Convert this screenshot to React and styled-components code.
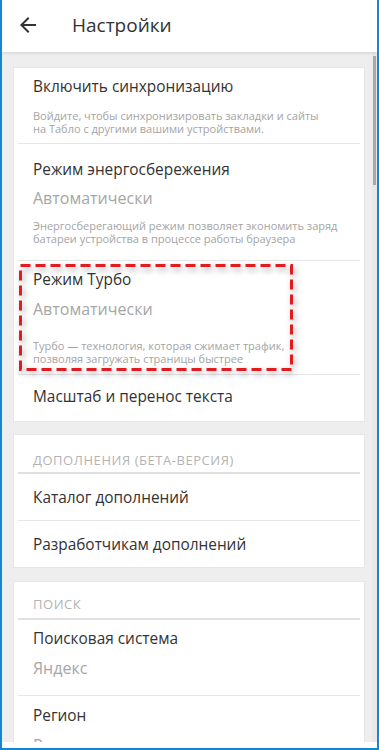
import React from 'react';
import styled, { createGlobalStyle } from 'styled-components';

const Global = createGlobalStyle`
  html, body {
    margin: 0;
    padding: 0;
    background: #ffffff;
  }
  * {
    box-sizing: border-box;
  }
`;

const Frame = styled.div`
  width: 379px;
  height: 750px;
  border: 2px solid #1487d2;
  border-top: none;
  background: #ffffff;
  display: flex;
  flex-direction: column;
  font-family: "Open Sans", "Noto Sans", sans-serif;
  overflow: hidden;
`;

const Header = styled.header`
  height: 52px;
  flex: none;
  display: flex;
  align-items: center;
  background: #ffffff;
  position: relative;
  z-index: 1;
  box-shadow: 0 1px 3px rgba(0, 0, 0, 0.12);
`;

const BackButton = styled.button`
  width: 24px;
  height: 24px;
  margin: -3px 0 0 14px;
  padding: 0;
  border: none;
  background: none;
  color: #333333;
  display: flex;
`;

const HeaderTitle = styled.h1`
  margin: -3px 0 0 32px;
  font-size: 19px;
  font-weight: 400;
  color: #333333;
`;

const Body = styled.div`
  height: 690px;
  flex: none;
  display: flex;
  background: #eeeeee;
  overflow: hidden;
`;

const Main = styled.main`
  flex: 1;
  padding: 15px 7px 0 11px;
  display: flex;
  flex-direction: column;
  gap: 12px;
`;

const Track = styled.div`
  width: 5px;
  flex: none;
  background: #e8e8e8;
  padding: 4px 0 0 1px;
`;

const Thumb = styled.div`
  width: 3px;
  height: 129px;
  background: #a9a9a9;
`;

const Card = styled.section`
  background: #ffffff;
  border: 1px solid #e6e6e6;
  margin-top: ${(p) => p.$top || 0}px;
`;

const Row = styled.div`
  position: relative;
  margin: 0 4px;
  padding: ${(p) => p.$pad} 15px;
  border-bottom: ${(p) => (p.$last ? 'none' : '1px solid #e6e6e6')};
`;

const SectionHead = styled.div`
  margin: 0 4px;
  padding: ${(p) => p.$pad} 15px;
  border-bottom: 2px solid #e0e0e0;
  font-size: 13px;
  line-height: 16px;
  letter-spacing: 0.55px;
  color: #b3b3b3;
  text-transform: uppercase;
`;

const Title = styled.div`
  font-size: 15.4px;
  line-height: 20px;
  color: #333333;
`;

const Value = styled.div`
  margin-top: ${(p) => p.$top || 8}px;
  font-size: 16px;
  line-height: 22px;
  color: #a6a6a6;
`;

const Desc = styled.div`
  margin-top: ${(p) => p.$top}px;
  font-size: 11px;
  line-height: 13px;
  color: #a4a4a4;
`;

const Highlight = styled.svg`
  position: absolute;
  left: 1px;
  top: 3px;
  width: 274px;
  height: 107px;
  overflow: visible;
  filter: drop-shadow(2px 3px 3px rgba(0, 0, 0, 0.35));
  pointer-events: none;
`;

const BottomGap = styled.div`
  flex: 1;
  background: #ffffff;
`;

function ArrowBack() {
  return (
    <svg width="24" height="24" viewBox="0 0 24 24" fill="currentColor">
      <path d="M20 11H7.83l5.59-5.59L12 4l-8 8 8 8 1.41-1.41L7.83 13H20v-2z" />
    </svg>
  );
}

function App() {
  return (
    <Frame>
      <Global />
      <Header>
        <BackButton aria-label="Назад">
          <ArrowBack />
        </BackButton>
        <HeaderTitle>Настройки</HeaderTitle>
      </Header>

      <Body>
        <Main>
          <Card>
            <Row $pad="9px 0 8px">
              <Title>Включить синхронизацию</Title>
              <Desc $top={12}>
                Войдите, чтобы синхронизировать закладки и сайты
                <br />
                на Табло с другими вашими устройствами.
              </Desc>
            </Row>
            <Row $pad="16px 0 15px">
              <Title>Режим энергосбережения</Title>
              <Value $top={7}>Автоматически</Value>
              <Desc $top={10}>
                Энергосберегающий режим позволяет экономить заряд
                <br />
                батареи устройства в процессе работы браузера
              </Desc>
            </Row>
            <Row $pad="9px 0 9px">
              <Title>Режим Турбо</Title>
              <Value>Автоматически</Value>
              <Desc $top={19}>
                Турбо — технология, которая сжимает трафик,
                <br />
                позволяя загружать страницы быстрее
              </Desc>
              <Highlight viewBox="0 0 274 107">
                <rect
                  x="1.5"
                  y="1.5"
                  width="271"
                  height="104"
                  fill="none"
                  stroke="#e31b1f"
                  strokeWidth="3"
                  strokeDasharray="10 5"
                />
              </Highlight>
            </Row>
            <Row $pad="12px 0 14px" $last>
              <Title>Масштаб и перенос текста</Title>
            </Row>
          </Card>

          <Card>
            <SectionHead $pad="17px 0 4px">Дополнения (бета-версия)</SectionHead>
            <Row $pad="14px 0 12px">
              <Title>Каталог дополнений</Title>
            </Row>
            <Row $pad="14px 0 12px" $last>
              <Title>Разработчикам дополнений</Title>
            </Row>
          </Card>

          <Card $top={1}>
            <SectionHead $pad="14px 0 6px">Поиск</SectionHead>
            <Row $pad="9px 0 16px">
              <Title>Поисковая система</Title>
              <Value>Яндекс</Value>
            </Row>
            <Row $pad="10px 0 16px" $last>
              <Title>Регион</Title>
              <Value>Россия</Value>
            </Row>
          </Card>
        </Main>
        <Track>
          <Thumb />
        </Track>
      </Body>
      <BottomGap />
    </Frame>
  );
}

export default App;
